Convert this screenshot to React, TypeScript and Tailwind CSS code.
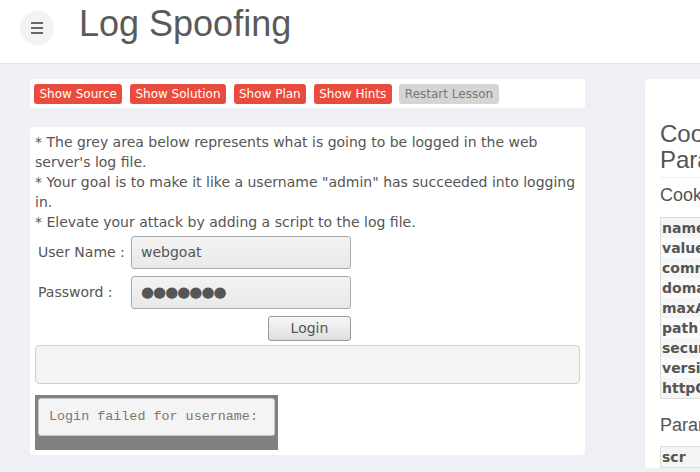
import React from "react";

const sans = "font-['DejaVu_Sans',Verdana,sans-serif]";
const helv = "font-['Liberation_Sans',Arial,sans-serif]";

const lessonButtons = ["Show Source", "Show Solution", "Show Plan", "Show Hints"];
const cookieFields = ["name", "value", "comment", "domain", "maxAge", "path", "secure", "version", "httpOnly"];

function Field({ label, children }: { label: string; children: React.ReactNode }) {
  return (
    <div className="flex items-center">
      <span className="w-[96px] shrink-0 pl-[3px] text-[14px] text-[#555]">{label}</span>
      <div className="flex h-[33px] w-[220px] items-center rounded-[3px] border border-[#a9a9a9] bg-gradient-to-b from-[#f3f3f3] to-[#e9e9e9] pl-[9px] text-[14px] text-[#555]">
        {children}
      </div>
    </div>
  );
}

export default function App() {
  return (
    <div className="h-[472px] w-[700px] overflow-hidden bg-[#eff0f5]">
      {/* top bar */}
      <div className="flex h-[64px] items-start border-b border-[#e3e3e6] bg-white">
        <div className="ml-[20px] mt-[11px] flex h-[34px] w-[34px] flex-col items-center justify-center gap-[3px] rounded-full bg-[#f3f3f3]">
          <span className="h-[2px] w-[12px] bg-[#666]" />
          <span className="h-[2px] w-[12px] bg-[#666]" />
          <span className="h-[2px] w-[12px] bg-[#666]" />
        </div>
        <h1 className={`${helv} ml-[25px] mt-[6px] text-[36px] leading-none text-[#5a5a5a]`}>Log Spoofing</h1>
      </div>

      <div className={`${sans} flex pl-[30px] pt-[15px]`}>
        <div className="w-[555px] shrink-0">
          <div className="flex h-[29px] items-center gap-[7.5px] rounded-[2px] bg-white px-[4px]">
            {lessonButtons.map((b) => (
              <span key={b} className="flex h-[20px] items-center rounded-[3px] bg-[#e74c3c] px-[5.5px] text-[12px] text-white">
                {b}
              </span>
            ))}
            <span className="flex h-[20px] items-center rounded-[3px] bg-[#d5d5d5] px-[5.5px] text-[12px] text-[#777]">
              Restart Lesson
            </span>
          </div>

          <div className="mt-[19px] rounded-[3px] bg-white p-[5px]">
            <div className="text-[14px] leading-[20px] text-[#555]">
              <p>* The grey area below represents what is going to be logged in the web server's log file.</p>
              <p>* Your goal is to make it like a username "admin" has succeeded into logging in.</p>
              <p>* Elevate your attack by adding a script to the log file.</p>
            </div>

            <div className="mt-[4px] flex flex-col gap-[7px]">
              <Field label="User Name :">webgoat</Field>
              <Field label="Password :">
                <span className="text-[15px] tracking-[-1px]">●●●●●●●</span>
              </Field>
              <div className="flex w-[316px] justify-end">
                <button className="flex h-[25px] w-[83px] items-center justify-center rounded-[3px] border border-[#999] bg-gradient-to-b from-[#f7f7f7] to-[#dedede] text-[14px] text-[#555]">
                  Login
                </button>
              </div>
            </div>

            <div className="mt-[4px] h-[39px] rounded-[4px] border border-[#cfcfcf] bg-[#f4f4f4]" />

            <div className="mt-[11px] w-[243px] bg-[#808080] p-[3px] pb-[14px]">
              <div className="flex h-[38px] items-center rounded-[3px] border border-[#c8c8c8] bg-[#f4f4f4] pl-[10px] font-['Liberation_Mono','Courier_New',monospace] text-[13.4px] text-[#777]">
                Login failed for username:
              </div>
            </div>
          </div>
        </div>

        <div className="ml-[60px] w-[300px] shrink-0 rounded-tl-[4px] bg-white pl-[15px] pt-[42px]">
          <h3 className={`${helv} text-[24px] leading-[26.4px] text-[#555]`}>
            Cookies /<br />
            Parameters
          </h3>
          <hr className="mt-[3px] border-[#eee]" />
          <h4 className={`${helv} mt-[7px] text-[18px] leading-[20px] text-[#555]`}>Cookies</h4>
          <div className="mt-[12px] border border-[#ddd]">
            {cookieFields.map((f, i) => (
              <div
                key={f}
                className={`h-[20px] pl-[1px] text-[14px] font-bold leading-[20px] text-[#555] ${i % 2 === 0 ? "bg-[#f5f5f5]" : "bg-[#fafafa]"}`}
              >
                {f}
              </div>
            ))}
          </div>
          <h4 className={`${helv} mt-[16px] text-[18px] leading-[20px] text-[#555]`}>Params</h4>
          <div className="mt-[11px] border border-[#ddd]">
            <div className="h-[20px] bg-[#f5f5f5] pl-[1px] text-[14px] font-bold leading-[20px] text-[#555]">scr</div>
          </div>
        </div>
      </div>
    </div>
  );
}
